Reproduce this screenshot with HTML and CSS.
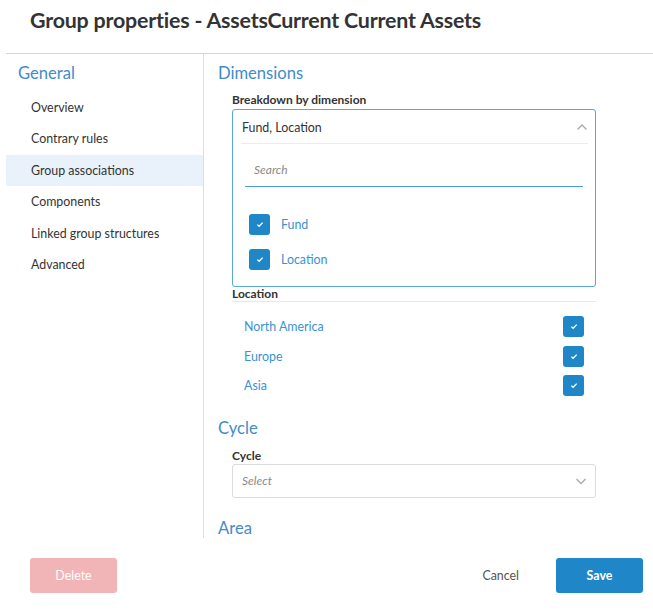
FILE: index.html
```html
<!DOCTYPE html>
<html>
<head>
<meta charset="utf-8">
<link rel="stylesheet" href="styles.css">
</head>
<body>
<div class="dialog">
  <div class="header"><h1 class="title">Group properties - AssetsCurrent Current Assets</h1></div>
  <div class="main">
    <nav class="sidebar">
      <div class="side-heading">General</div>
      <ul class="nav">
        <li class="nav-item">Overview</li>
        <li class="nav-item">Contrary rules</li>
        <li class="nav-item active">Group associations</li>
        <li class="nav-item">Components</li>
        <li class="nav-item">Linked group structures</li>
        <li class="nav-item">Advanced</li>
      </ul>
    </nav>
    <section class="content">
      <h2 class="section-heading">Dimensions</h2>
      <div class="field-label first">Breakdown by dimension</div>
      <div class="dropdown">
        <div class="dd-head">
          <span class="dd-value">Fund, Location</span>
          <svg class="chev" width="12" height="8" viewBox="0 0 12 8"><polyline points="1.5,6.5 6,2 10.5,6.5" fill="none" stroke="#a8a8a8" stroke-width="1.3"/></svg>
        </div>
        <div class="dd-search"><span class="search-ph">Search</span></div>
        <ul class="dd-options">
          <li class="dd-option"><span class="cb"><svg width="8" height="7" viewBox="0 0 8 7"><polyline points="1.3,3.6 3.1,5.3 6.7,1.6" fill="none" stroke="#fff" stroke-width="1.3"/></svg></span><span class="opt-text">Fund</span></li>
          <li class="dd-option"><span class="cb"><svg width="8" height="7" viewBox="0 0 8 7"><polyline points="1.3,3.6 3.1,5.3 6.7,1.6" fill="none" stroke="#fff" stroke-width="1.3"/></svg></span><span class="opt-text">Location</span></li>
        </ul>
      </div>
      <div class="group-label">Location</div>
      <ul class="loc-list">
        <li class="loc-row"><span class="loc-name">North America</span><span class="cb"><svg width="8" height="7" viewBox="0 0 8 7"><polyline points="1.3,3.6 3.1,5.3 6.7,1.6" fill="none" stroke="#fff" stroke-width="1.3"/></svg></span></li>
        <li class="loc-row"><span class="loc-name">Europe</span><span class="cb"><svg width="8" height="7" viewBox="0 0 8 7"><polyline points="1.3,3.6 3.1,5.3 6.7,1.6" fill="none" stroke="#fff" stroke-width="1.3"/></svg></span></li>
        <li class="loc-row"><span class="loc-name">Asia</span><span class="cb"><svg width="8" height="7" viewBox="0 0 8 7"><polyline points="1.3,3.6 3.1,5.3 6.7,1.6" fill="none" stroke="#fff" stroke-width="1.3"/></svg></span></li>
      </ul>
      <h2 class="section-heading cycle">Cycle</h2>
      <div class="field-label">Cycle</div>
      <div class="select">
        <span class="select-ph">Select</span>
        <svg class="chev" width="12" height="8" viewBox="0 0 12 8"><polyline points="1.5,2 6,6.5 10.5,2" fill="none" stroke="#a8a8a8" stroke-width="1.3"/></svg>
      </div>
      <h2 class="section-heading area">Area</h2>
    </section>
  </div>
  <div class="footer">
    <button class="btn btn-delete">Delete</button>
    <div class="footer-right">
      <button class="btn btn-cancel">Cancel</button>
      <button class="btn btn-save">Save</button>
    </div>
  </div>
</div>
</body>
</html>
```
FILE: styles.css
```css
* { box-sizing: border-box; }
html, body { margin: 0; padding: 0; background: #fff; }
body { font-family: Lato, "Open Sans", sans-serif; color: #333; width: 653px; height: 616px; overflow: hidden; }
ul { list-style: none; margin: 0; padding: 0; }
h1, h2 { margin: 0; }

.dialog { width: 653px; height: 616px; display: flex; flex-direction: column; }

.header { height: 53px; padding: 7px 0 0 30px; }
.title { font-size: 21.4px; font-weight: 700; line-height: 26px; color: #333; letter-spacing: -0.2px; }

.main { margin-left: 6px; border-top: 1px solid #d6d6d6; height: 485px; display: flex; overflow: hidden; }

.sidebar { width: 198px; flex: none; border-right: 1px solid #dedede; }
.side-heading { font-size: 16.6px; line-height: 20px; color: #3f8ccb; padding: 9px 0 0 12px; height: 38px; }
.nav-item { height: 31.4px; line-height: 31.4px; font-size: 12.4px; padding-left: 25px; color: #333; }
.nav-item.active { background: #e9f2fb; }

.content { flex: 1; padding-left: 14px; }
.section-heading { font-size: 16.6px; font-weight: 400; line-height: 20px; color: #3f8ccb; margin-top: 9px; }
.section-heading.cycle { margin-top: 17px; }
.section-heading.area { margin-top: 20px; line-height: 20px; }
.field-label { font-size: 12px; font-weight: 700; line-height: 16px; color: #333; margin: 10px 0 0 14px; }
.field-label.first { margin-top: 9px; }

.dropdown { margin: 1px 0 0 14px; width: 364px; height: 178px; border: 1px solid #5aa7e0; border-radius: 3px; background: #fff; }
.dd-head { height: 34px; margin: 0 7px 0 8px; border-bottom: 1px solid #ececec; display: flex; align-items: center; justify-content: space-between; padding: 1px 0 0 1px; }
.dd-value { font-size: 12.4px; color: #333; }
.dd-search { margin: 9px 12px 0 12px; height: 34px; border-bottom: 1px solid #4a9fdc; display: flex; align-items: center; padding-left: 9px; padding-top: 0; }
.search-ph { font-size: 12px; font-style: italic; color: #8a8a8a; }
.dd-options { padding: 20px 0 0 16px; }
.dd-option { height: 35px; display: flex; align-items: center; }
.opt-text { font-size: 12.4px; color: #3a92d4; margin-left: 11px; }
.cb { width: 21px; height: 21px; border-radius: 3px; background: #1f86c8; display: flex; align-items: center; justify-content: center; flex: none; }

.group-label { margin-left: 14px; width: 364px; font-size: 12px; font-weight: 700; line-height: 13px; color: #333; height: 15px; border-bottom: 1px solid #e8e8e8; }

.loc-list { margin-left: 14px; width: 364px; padding: 10px 12px 0 12px; }
.loc-row { height: 29.5px; display: flex; align-items: center; justify-content: space-between; }
.loc-name { font-size: 12.4px; color: #3a92d4; }

.select { margin: 0 0 0 14px; width: 364px; height: 34px; border: 1px solid #dcdcdc; border-radius: 3px; display: flex; align-items: center; justify-content: space-between; padding: 0 8px 0 9px; }
.select-ph { font-size: 12px; font-style: italic; color: #8a8a8a; }

.footer { flex: 1; display: flex; justify-content: space-between; align-items: flex-start; padding: 20px 10px 0 30px; }
.footer-right { display: flex; align-items: center; gap: 37px; }
.btn { font-family: Lato, "Open Sans", sans-serif; font-size: 12.4px; border: none; border-radius: 3px; height: 35px; width: 87px; cursor: pointer; }
.btn-delete { background: #f2b5b7; color: #fff; }
.btn-cancel { background: none; width: auto; padding: 0; color: #555; }
.btn-save { background: #1f87c8; color: #fff; font-weight: 700; }
```
